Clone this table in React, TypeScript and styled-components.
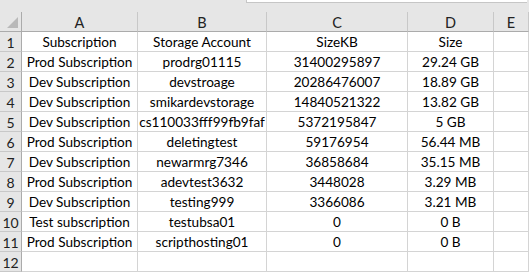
import React from "react";
import styled, { createGlobalStyle } from "styled-components";

const Global = createGlobalStyle`
  html, body { margin: 0; padding: 0; background: #ffffff; overflow: hidden; }
  body { font-family: Lato, "Open Sans", sans-serif; }
`;

const Sheet = styled.div`
  width: 529px;
  height: 276px;
  overflow: hidden;
  background: #ffffff;
`;

const TopStrip = styled.div`
  height: 12px;
  background: #e6e6e6;
  display: flex;
`;

const StripBox = styled.div`
  margin-left: 246px;
  width: 280px;
  height: 2px;
  background: #ffffff;
  border-left: 1px solid #c6c6c6;
  border-bottom: 1px solid #c6c6c6;
`;

const Grid = styled.div`
  display: grid;
  grid-template-columns: 22px 116px 129px 141px 86px 1fr;
  grid-auto-rows: 20px;
`;

const HeadCell = styled.div<{ $corner?: boolean }>`
  box-sizing: border-box;
  background: #e6e6e6;
  border-right: 1px solid ${(p) => (p.$corner ? "#ababab" : "#c8c8c8")};
  border-bottom: 1px solid #ababab;
  color: #222;
  font-size: 14.5px;
  padding-top: 1px;
  display: flex;
  align-items: center;
  justify-content: center;
  position: relative;
`;

const Triangle = styled.div`
  position: absolute;
  right: 3px;
  bottom: 3px;
  width: 0;
  height: 0;
  border-left: 11px solid transparent;
  border-bottom: 11px solid #b9b9b9;
`;

const RowHead = styled.div`
  box-sizing: border-box;
  background: #e6e6e6;
  border-right: 1px solid #ababab;
  border-bottom: 1px solid #c8c8c8;
  color: #222;
  font-size: 14px;
  padding-top: 1px;
  display: flex;
  align-items: center;
  justify-content: center;
`;

const Cell = styled.div`
  box-sizing: border-box;
  border-right: 1px solid #d4d4d4;
  border-bottom: 1px solid #d4d4d4;
  color: #000;
  font-size: 13.6px;
  padding-top: 1px;
  display: flex;
  align-items: center;
  justify-content: center;
  white-space: nowrap;
  overflow: hidden;
`;

const rows: string[][] = [
  ["Subscription", "Storage Account", "SizeKB", "Size"],
  ["Prod Subscription", "prodrg01115", "31400295897", "29.24 GB"],
  ["Dev Subscription", "devstroage", "20286476007", "18.89 GB"],
  ["Dev Subscription", "smikardevstorage", "14840521322", "13.82 GB"],
  ["Dev Subscription", "cs110033fff99fb9faf", "5372195847", "5 GB"],
  ["Prod Subscription", "deletingtest", "59176954", "56.44 MB"],
  ["Dev Subscription", "newarmrg7346", "36858684", "35.15 MB"],
  ["Prod Subscription", "adevtest3632", "3448028", "3.29 MB"],
  ["Dev Subscription", "testing999", "3366086", "3.21 MB"],
  ["Test subscription", "testubsa01", "0", "0 B"],
  ["Prod Subscription", "scripthosting01", "0", "0 B"],
  ["", "", "", ""],
];

export default function App() {
  return (
    <Sheet>
      <Global />
      <TopStrip>
        <StripBox />
      </TopStrip>
      <Grid>
        <HeadCell $corner>
          <Triangle />
        </HeadCell>
        {["A", "B", "C", "D", "E"].map((l) => (
          <HeadCell key={l}>{l}</HeadCell>
        ))}
        {rows.map((r, i) => (
          <React.Fragment key={i}>
            <RowHead>{i + 1}</RowHead>
            {r.map((v, j) => (
              <Cell key={j}>{v}</Cell>
            ))}
            <Cell />
          </React.Fragment>
        ))}
      </Grid>
    </Sheet>
  );
}
